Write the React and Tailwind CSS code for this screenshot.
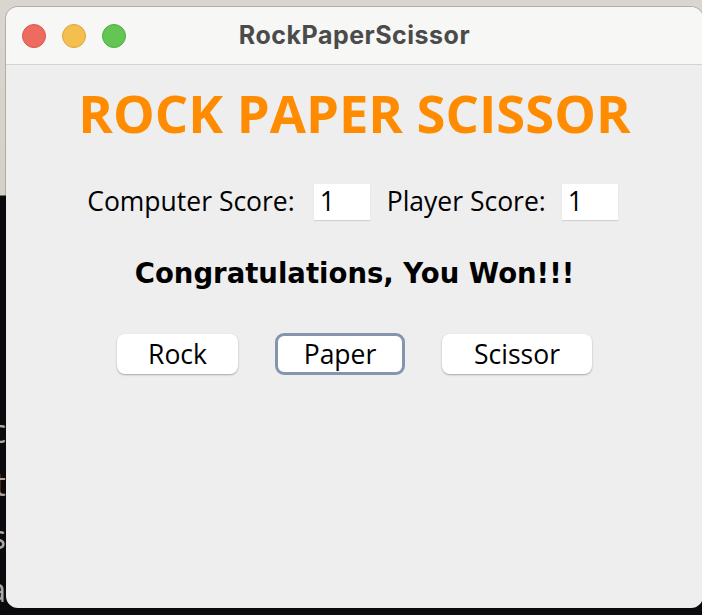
export default function App() {
  const sans = "font-['Open_Sans',sans-serif]";

  return (
    <div className="w-[702px] h-[615px] overflow-hidden bg-[linear-gradient(to_bottom,#d9d6d0_0px,#d4d1cb_195px,#0b0b0f_196px)] flex">
      {/* desktop sliver on the left */}
      <div className="w-[6px] shrink-0 overflow-hidden flex justify-end">
        <div className={`${sans} shrink-0 pt-[404px] text-[32px] leading-[53px] text-[#a9a9ad] text-right`}>
          <div>oc</div>
          <div>et</div>
          <div>as</div>
          <div>na</div>
        </div>
      </div>

      <div className="pt-[7px] shrink-0">
        {/* window */}
        <div className="w-[697px] h-[601px] rounded-[12px] overflow-hidden bg-[#eeeeee] flex flex-col shadow-[0_0_0_1px_rgba(0,0,0,0.18)]">
          {/* title bar */}
          <div className="h-[58px] shrink-0 bg-[#f7f7f5] border-b border-[#d2d2d0] grid grid-cols-[1fr_auto_1fr] items-center">
            <div className="flex items-center gap-[16px] pl-[16px]">
              <span className="w-[24px] h-[24px] rounded-full bg-[#ee6b60] border border-[#d8564b]" />
              <span className="w-[24px] h-[24px] rounded-full bg-[#f5bf4f] border border-[#dba63a]" />
              <span className="w-[24px] h-[24px] rounded-full bg-[#62c554] border border-[#4fae43]" />
            </div>
            <div className="font-['Inter',sans-serif] font-bold text-[25px] tracking-[0.5px] text-[#4b4b4b] leading-none">
              RockPaperScissor
            </div>
            <div />
          </div>

          {/* content */}
          <div className={`${sans} flex flex-col items-center text-black`}>
            <h1 className="mt-[22px] text-[52.5px] leading-none font-bold text-[#ff8c00]">
              ROCK PAPER SCISSOR
            </h1>

            <div className="mt-[44px] pr-[4px] flex items-center text-[26.5px] leading-none">
              <span>Computer Score:</span>
              <div className="ml-[19px] w-[56px] h-[36px] bg-white shadow-[0_1px_1px_rgba(0,0,0,0.12)] flex items-center pl-[6px]">
                1
              </div>
              <span className="ml-[17px]">Player Score:</span>
              <div className="ml-[16px] w-[56px] h-[36px] bg-white shadow-[0_1px_1px_rgba(0,0,0,0.12)] flex items-center pl-[6px]">
                1
              </div>
            </div>

            <p className="mt-[40px] font-['DejaVu_Sans',sans-serif] text-[27.5px] leading-none font-bold">
              Congratulations, You Won!!!
            </p>

            <div className="mt-[46px] flex items-center gap-[37px] text-[26.5px] leading-none">
              <button className="w-[121px] h-[40px] rounded-[8px] bg-white shadow-[0_1px_2px_rgba(0,0,0,0.3)]">
                Rock
              </button>
              <button className="w-[130px] h-[42px] rounded-[9px] bg-white border-[3px] border-[#8496ae]">
                Paper
              </button>
              <button className="w-[150px] h-[40px] rounded-[8px] bg-white shadow-[0_1px_2px_rgba(0,0,0,0.3)]">
                Scissor
              </button>
            </div>
          </div>
        </div>
      </div>
    </div>
  );
}
